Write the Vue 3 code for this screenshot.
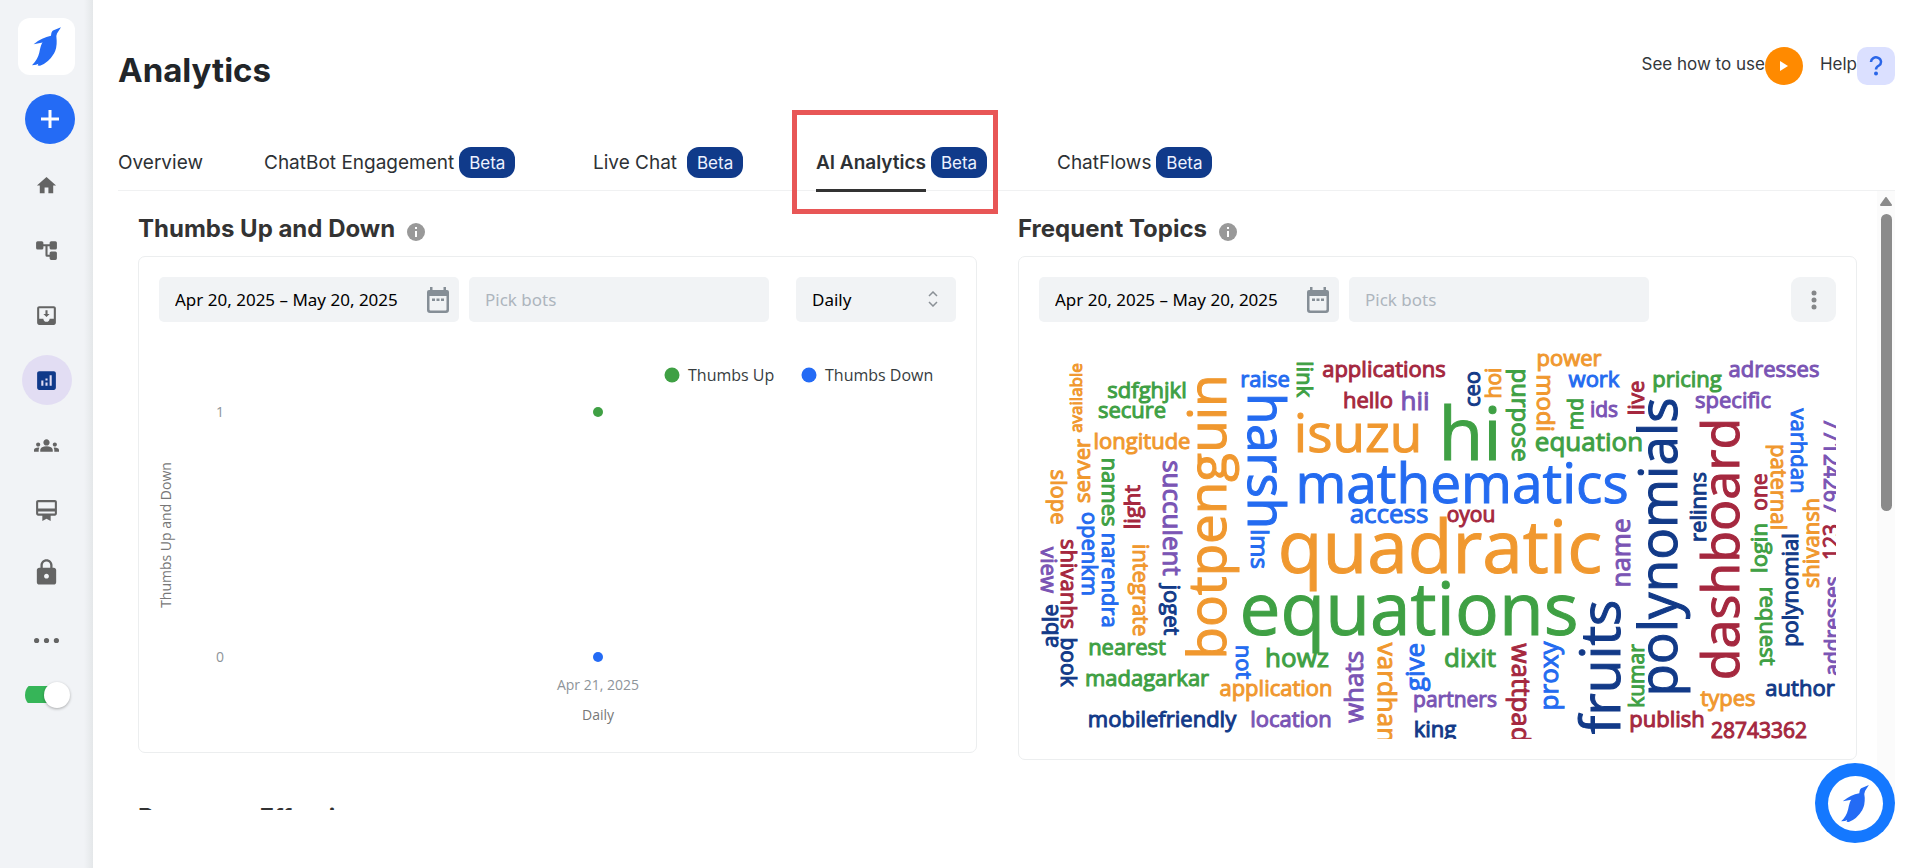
<script setup>
import { ref } from 'vue'

const dates = 'Apr 20, 2025 – May 20, 2025'
const period = ref('Daily')
const online = ref(true)

const penguin =
  'M87 0L63 10Q58 13 57 26Q30 31 5 51L32 46Q27 50 22 76Q17 98 0 114L12 113L19 110L17 115L24 116Q50 106 66 79Q75 63 74 40Q71 26 75 19Z'

const nav = [
  { label: 'Home', size: 23, d: 'M10 20v-6h4v6h5v-8h3L12 3 2 12h3v8z' },
  {
    label: 'Flows',
    size: 25,
    d: 'M3.500 3h4Q9 3 9 4.500V6h6V4.500Q15 3 16.500 3h4Q22 3 22 4.500v5Q22 11 20.500 11h-4Q15 11 15 9.500V8h-2v8h2v-1.500Q15 13 16.500 13h4q1.500 0 1.500 1.500v5q0 1.500-1.500 1.500h-4Q15 21 15 19.500V18h-2.500Q11 18 11 16.500V8H9v1.500Q9 11 7.500 11h-4Q2 11 2 9.500v-5Q2 3 3.500 3z'
  },
  {
    label: 'Inbox',
    size: 25,
    d: 'M19 3H4.990c-1.110 0-1.980.9-1.980 2L3 19c0 1.100.88 2 1.990 2H19c1.100 0 2-.9 2-2V5c0-1.100-.9-2-2-2zm0 12h-4c0 1.660-1.350 3-3 3s-3-1.340-3-3H4.990V5H19v10zm-4-4.500h-2V7h-2v3.500H9l3 3 3-3z'
  },
  {
    label: 'Analytics',
    size: 25,
    active: true,
    d: 'M19 3H5c-1.100 0-2 .9-2 2v14c0 1.100.9 2 2 2h14c1.100 0 2-.9 2-2V5c0-1.100-.9-2-2-2zM9 17H7v-5h2v5zm4 0h-2v-3h2v3zm0-5h-2v-2h2v2zm4 5h-2V7h2v10z'
  },
  {
    label: 'Team',
    size: 25,
    d: 'M12 12.750c1.630 0 3.070.39 4.240.9 1.080.48 1.760 1.560 1.760 2.730V18H6v-1.610c0-1.180.68-2.260 1.760-2.730 1.170-.52 2.610-.91 4.240-.91zM4 13c1.100 0 2-.9 2-2s-.9-2-2-2-2 .9-2 2 .9 2 2 2zm1.130 1.100c-.37-.06-.74-.1-1.130-.1-.99 0-1.930.21-2.780.58C.48 14.900 0 15.620 0 16.430V18h4.500v-1.610c0-.83.23-1.610.63-2.290zM20 13c1.100 0 2-.9 2-2s-.9-2-2-2-2 .9-2 2 .9 2 2 2zm4 3.430c0-.81-.48-1.530-1.220-1.850-.85-.37-1.790-.58-2.780-.58-.39 0-.76.04-1.130.1.4.68.63 1.460.63 2.290V18H24v-1.570zM12 6c1.660 0 3 1.340 3 3s-1.340 3-3 3-3-1.340-3-3 1.340-3 3-3z'
  },
  {
    label: 'Subscription',
    size: 25,
    d: 'M20 2H4c-1.110 0-2 .89-2 2v11c0 1.110.89 2 2 2h4v5l4-2 4 2v-5h4c1.110 0 2-.89 2-2V4c0-1.110-.89-2-2-2zm0 13H4v-2h16v2zm0-5H4V4h16v6z'
  },
  {
    label: 'Security',
    size: 29,
    raised: true,
    d: 'M18 8h-1V6c0-2.760-2.240-5-5-5S7 3.240 7 6v2H6c-1.100 0-2 .9-2 2v10c0 1.100.9 2 2 2h12c1.100 0 2-.9 2-2V10c0-1.100-.9-2-2-2zm-6 9c-1.100 0-2-.9-2-2s.9-2 2-2 2 .9 2 2-.9 2-2 2zm3.100-9H8.900V6c0-1.710 1.390-3.100 3.100-3.100s3.100 1.390 3.100 3.100v2z'
  },
  {
    label: 'More',
    size: 25,
    d: 'M2.500 9.500a2.500 2.500 0 1 0 0 5a2.500 2.500 0 1 0 0-5zM12 9.500a2.500 2.500 0 1 0 0 5a2.500 2.500 0 1 0 0-5zM21.500 9.500a2.500 2.500 0 1 0 0 5a2.500 2.500 0 1 0 0-5z'
  }
]

const tabs = [
  { label: 'Overview' },
  { label: 'ChatBot Engagement', beta: true },
  { label: 'Live Chat', beta: true, wide: true },
  { label: 'AI Analytics', beta: true, active: true },
  { label: 'ChatFlows', beta: true }
]

// [text, x, y, angle, size, colour]; x is the word's middle for level words and
// its baseline for turned ones, y the other way round.
const words = [
  ['available', 43, 48, -90, 17, 'orange'],
  ['sdfghjkl', 108, 48, 0, 22, 'green'],
  ['secure', 93, 68, 0, 22, 'green'],
  ['longitude', 103, 99, 0, 22, 'orange'],
  ['server', 51, 121, -90, 22, 'orange'],
  ['slope', 12, 147, 90, 22, 'orange'],
  ['names', 63, 142, 90, 22, 'green'],
  ['light', 101, 157, -90, 22, 'red'],
  ['succulent', 124, 168, 90, 26, 'purple'],
  ['openkm', 43, 204, 90, 22, 'blue'],
  ['view', 2, 220, 90, 22, 'purple'],
  ['shivanhs', 22, 234, 90, 22, 'red'],
  ['able', 19, 276, -90, 22, 'navy'],
  ['book', 22, 312, 90, 21, 'navy'],
  ['narendra', 63, 230, 90, 22, 'blue'],
  ['integrate', 94, 240, 90, 22, 'orange'],
  ['joget', 125, 260, 90, 22, 'navy'],
  ['nearest', 88, 305, 0, 22, 'green'],
  ['madagarkar', 108, 336, 0, 22, 'green'],
  ['mobilefriendly', 123, 377, 0, 22, 'navy'],
  ['botpenguin', 187, 167, -90, 53, 'orange'],
  ['raise', 226, 37, 0, 22, 'blue'],
  ['harsh', 209, 111, 90, 51, 'blue'],
  ['link', 258, 29, 90, 22, 'green'],
  ['lms', 212, 199, 90, 24, 'blue'],
  ['not', 197, 312, 90, 22, 'blue'],
  ['applications', 345, 27, 0, 22, 'red'],
  ['hello', 329, 58, 0, 22, 'red'],
  ['hii', 376, 60, 0, 26, 'purple'],
  ['isuzu', 319, 102, 0, 53, 'orange'],
  ['hi', 431, 110, 0, 73, 'green'],
  ['mathematics', 423, 153, 0, 55, 'blue'],
  ['access', 350, 173, 0, 26, 'blue'],
  ['oyou', 432, 172, 0, 21, 'red'],
  ['quadratic', 401, 223, 0, 73, 'orange'],
  ['equations', 370, 285, 0, 73, 'green'],
  ['ceo', 441, 39, -90, 22, 'navy'],
  ['hoi', 462, 33, -90, 21, 'orange'],
  ['purpose', 473, 65, 90, 24, 'green'],
  ['modi', 498, 53, 90, 24, 'orange'],
  ['power', 530, 16, 0, 22, 'orange'],
  ['work', 555, 37, 0, 22, 'blue'],
  ['md', 544, 64, -90, 21, 'green'],
  ['ids', 565, 67, 0, 21, 'purple'],
  ['live', 605, 48, -90, 22, 'red'],
  ['pricing', 648, 37, 0, 22, 'green'],
  ['adresses', 735, 27, 0, 22, 'purple'],
  ['specific', 694, 58, 0, 22, 'purple'],
  ['equation', 550, 101, 0, 26, 'green'],
  ['polynomials', 638, 197, -90, 53, 'navy'],
  ['dashboard', 700, 199, -90, 52, 'red'],
  ['name', 591, 203, -90, 26, 'purple'],
  ['relinns', 667, 157, -90, 22, 'navy'],
  ['one', 728, 142, -90, 21, 'red'],
  ['login', 728, 198, -90, 22, 'green'],
  ['paternal', 732, 137, 90, 22, 'orange'],
  ['varhdan', 752, 101, 90, 22, 'blue'],
  ['shivansh', 780, 193, -90, 22, 'orange'],
  ['polynomial', 759, 240, -90, 22, 'navy'],
  ['request', 721, 276, 90, 22, 'green'],
  ['77124267', 785, 116, 90, 21, 'purple'],
  ['123', 800, 192, -90, 21, 'red'],
  ['addresses', 801, 276, -90, 21, 'purple'],
  ['fruits', 581, 317, -90, 55, 'navy'],
  ['kumar', 605, 326, -90, 21, 'green'],
  ['proxy', 519, 326, -90, 26, 'blue'],
  ['types', 689, 356, 0, 22, 'orange'],
  ['author', 761, 346, 0, 22, 'navy'],
  ['publish', 628, 377, 0, 22, 'red'],
  ['28743362', 720, 388, 0, 21, 'red'],
  ['howz', 258, 317, 0, 26, 'green'],
  ['application', 237, 346, 0, 22, 'orange'],
  ['location', 252, 377, 0, 22, 'purple'],
  ['whats', 324, 337, -90, 26, 'purple'],
  ['vardhan', 339, 343, 90, 26, 'orange'],
  ['give', 385, 317, -90, 26, 'blue'],
  ['dixit', 431, 317, 0, 26, 'green'],
  ['partners', 416, 357, 0, 21, 'purple'],
  ['king', 396, 387, 0, 22, 'navy'],
  ['wattpad', 473, 343, 90, 26, 'red']
].map(([text, x, y, angle, size, tone]) => ({ text, x, y, angle, size, tone }))
</script>

<template>
  <div class="app">
    <aside class="sidebar">
      <a class="logo" href="#" aria-label="Dashboard">
        <svg width="29" height="39" viewBox="0 0 87 116"><path :d="penguin" fill="#246bf5" /></svg>
      </a>
      <button class="add" type="button" aria-label="Create">
        <svg width="20" height="20" viewBox="0 0 20 20"><path d="M10 1v18M1 10h18" stroke="#fff" stroke-width="3" /></svg>
      </button>
      <nav class="nav">
        <a
          v-for="item in nav"
          :key="item.label"
          href="#"
          class="nav-item"
          :class="{ active: item.active, raised: item.raised }"
          :aria-label="item.label"
        >
          <svg :width="item.size" :height="item.size" viewBox="0 0 24 24"><path :d="item.d" fill="currentColor" /></svg>
        </a>
      </nav>
      <input v-model="online" class="switch" type="checkbox" role="switch" aria-label="Online" />
    </aside>

    <main class="main">
      <header class="header">
        <h1>Analytics</h1>
        <div class="actions">
          <a href="#" class="action">
            <span>See how to use</span>
            <span class="play"><svg width="8" height="10" viewBox="0 0 8 10"><path d="M0 0l8 5-8 5z" fill="#fff" /></svg></span>
          </a>
          <a href="#" class="action">
            <span>Help</span>
            <span class="question">
              <svg width="14" height="20" viewBox="0 0 14 20">
                <path d="M2 6a5 4.500 0 1 1 8 3.500Q7 11 7 13.500" fill="none" stroke="#2a66e8" stroke-width="2.500" />
                <circle cx="7" cy="17.500" r="2" fill="#2a66e8" />
              </svg>
            </span>
          </a>
        </div>
      </header>

      <nav class="tabs" aria-label="Analytics sections">
        <a v-for="tab in tabs" :key="tab.label" href="#" class="tab" :class="{ active: tab.active, wide: tab.wide }">
          <span class="tab-label">{{ tab.label }}</span>
          <span v-if="tab.beta" class="beta">Beta</span>
        </a>
      </nav>

      <div class="viewport">
        <div class="grid">
          <section>
            <h2>
              Thumbs Up and Down
              <svg class="info" width="18" height="18" viewBox="0 0 18 18">
                <circle cx="9" cy="9" r="9" fill="#999" />
                <path d="M8 4h2v2H8zM8 8h2v6H8z" fill="#fff" />
              </svg>
            </h2>
            <div class="card">
              <div class="tools">
                <label class="field date">
                  <input type="text" :value="dates" readonly aria-label="Date range" />
                  <svg width="24" height="26" viewBox="0 0 24 26">
                    <path
                      fill="#858e96"
                      fill-rule="evenodd"
                      d="M4 0h2.500v3h11V0H20v3h1q2 0 2 2v18q0 3-3 3H4q-3 0-3-3V5q0-2 2-2h1zM3.500 9v13.500q0 1 1 1h15q1 0 1-1V9zM6 11.500h3v2.500H6zM10.500 11.500h3v2.500h-3zM15 11.500h3v2.500h-3z"
                    />
                  </svg>
                </label>
                <input class="field bots" type="text" placeholder="Pick bots" aria-label="Pick bots" />
                <div class="period">
                  <select v-model="period" class="field" aria-label="Period">
                    <option>Daily</option>
                    <option>Weekly</option>
                    <option>Monthly</option>
                  </select>
                  <svg width="10" height="16" viewBox="0 0 10 16">
                    <path d="M1 5l4-4 4 4M1 11l4 4 4-4" fill="none" stroke="#8a9096" stroke-width="1.500" />
                  </svg>
                </div>
              </div>
              <svg class="chart" viewBox="0 0 797 410" role="img" aria-label="Thumbs up and down by day">
                <g class="legend">
                  <circle cx="513" cy="53" r="7.500" fill="#3fa044" />
                  <text x="529" y="59">Thumbs Up</text>
                  <circle cx="650" cy="53" r="7.500" fill="#246bf5" />
                  <text x="666" y="59">Thumbs Down</text>
                </g>
                <g class="axis">
                  <text x="61" y="95">1</text>
                  <text x="61" y="340">0</text>
                  <text x="439" y="368">Apr 21, 2025</text>
                  <text x="439" y="398" class="name">Daily</text>
                  <text transform="translate(12 213) rotate(-90)" class="name">Thumbs Up and Down</text>
                </g>
                <circle cx="439" cy="90" r="5" fill="#3fa044" />
                <circle cx="439" cy="335" r="5" fill="#246bf5" />
              </svg>
            </div>
          </section>

          <section>
            <h2>
              Frequent Topics
              <svg class="info" width="18" height="18" viewBox="0 0 18 18">
                <circle cx="9" cy="9" r="9" fill="#999" />
                <path d="M8 4h2v2H8zM8 8h2v6H8z" fill="#fff" />
              </svg>
            </h2>
            <div class="card">
              <div class="tools">
                <label class="field date">
                  <input type="text" :value="dates" readonly aria-label="Date range" />
                  <svg width="24" height="26" viewBox="0 0 24 26">
                    <path
                      fill="#858e96"
                      fill-rule="evenodd"
                      d="M4 0h2.500v3h11V0H20v3h1q2 0 2 2v18q0 3-3 3H4q-3 0-3-3V5q0-2 2-2h1zM3.500 9v13.500q0 1 1 1h15q1 0 1-1V9zM6 11.500h3v2.500H6zM10.500 11.500h3v2.500h-3zM15 11.500h3v2.500h-3z"
                    />
                  </svg>
                </label>
                <input class="field bots" type="text" placeholder="Pick bots" aria-label="Pick bots" />
                <button class="kebab" type="button" aria-label="More options">
                  <svg width="6" height="20" viewBox="0 0 6 20" fill="#858789">
                    <circle cx="3" cy="3" r="2.500" /><circle cx="3" cy="10" r="2.500" /><circle cx="3" cy="17" r="2.500" />
                  </svg>
                </button>
              </div>
              <svg class="cloud" viewBox="0 0 797 389" role="img" aria-label="Frequent topics">
                <text
                  v-for="word in words"
                  :key="word.text"
                  :class="word.tone"
                  :font-size="word.size"
                  :transform="`translate(${word.x} ${word.y}) rotate(${word.angle})`"
                >{{ word.text }}</text>
              </svg>
            </div>
          </section>

          <section>
            <h2>Response Effectiveness</h2>
          </section>
        </div>
        <div class="scrollbar" aria-hidden="true">
          <svg width="12" height="9" viewBox="0 0 12 9"><path d="M6 1l5 7H1z" fill="#8b8b8b" stroke="#8b8b8b" stroke-width="2" stroke-linejoin="round" /></svg>
          <div class="thumb"></div>
        </div>
      </div>
    </main>

    <button class="bubble" type="button" aria-label="Open chat">
      <span><svg width="28" height="37" viewBox="0 0 87 116"><path :d="penguin" fill="#246bf5" /></svg></span>
    </button>
  </div>
</template>

<style>
body {
  margin: 0;
  background: #fff;
}
</style>

<style scoped>
.app {
  display: flex;
  height: 100vh;
  overflow: hidden;
  font-family: Inter, 'Liberation Sans', sans-serif;
  color: #212529;
}
a {
  color: inherit;
  text-decoration: none;
}
button {
  padding: 0;
  border: 0;
  cursor: pointer;
}
.sidebar {
  flex: none;
  box-sizing: border-box;
  width: 93px;
  padding-top: 18px;
  display: flex;
  flex-direction: column;
  align-items: center;
  background: linear-gradient(to right, #f1f3f6 84px, #e4e7e9);
}
.logo {
  display: grid;
  place-items: center;
  width: 57px;
  height: 57px;
  border-radius: 12px;
  background: #fff;
}
.add {
  display: grid;
  place-items: center;
  width: 50px;
  height: 50px;
  margin: 19px 0 16px 7px;
  border-radius: 50%;
  background: #246bf5;
}
.nav {
  display: flex;
  flex-direction: column;
  gap: 15px;
}
.nav-item {
  display: grid;
  place-items: center;
  box-sizing: border-box;
  width: 50px;
  height: 50px;
  border-radius: 50%;
  color: #646464;
}
.nav-item.active {
  background: #e2ddf3;
  color: #103a8a;
}
.nav-item.raised {
  padding-bottom: 6px;
}
.switch {
  appearance: none;
  display: flex;
  justify-content: flex-end;
  width: 45px;
  height: 26px;
  margin: 17px 0 0 2px;
  border-radius: 13px;
  background: linear-gradient(#36b558, #36b558) 0 4px / 36px 17px no-repeat;
  cursor: pointer;
}
.switch::before {
  content: '';
  width: 26px;
  height: 26px;
  border-radius: 50%;
  background: #fff;
  box-shadow: 0 1px 3px rgba(0, 0, 0, 0.3);
}
.main {
  flex: 1;
  min-width: 0;
  display: flex;
  flex-direction: column;
  padding: 47px 12px 58px 25px;
}
.header {
  display: flex;
  justify-content: space-between;
  align-items: flex-start;
}
h1 {
  margin: 0;
  font-size: 33px;
  line-height: 46px;
  font-weight: 700;
}
.actions {
  display: flex;
  gap: 17px;
  font-size: 17px;
  line-height: 34px;
  color: #33373b;
}
.action {
  display: flex;
}
.play,
.question {
  display: grid;
  place-items: center;
  width: 38px;
  height: 38px;
  background: #ff8a00;
  border-radius: 50%;
}
.question {
  background: #dbe0ff;
  border-radius: 10px;
}
.tabs {
  display: grid;
  grid-template-columns: 146px 329px 223px 241px auto;
  margin-top: 54px;
  padding-bottom: 12px;
  border-bottom: 1px solid #f0f1f2;
  font-size: 19px;
  line-height: 32px;
  color: #2d3135;
}
.tab {
  position: relative;
  display: flex;
  gap: 5px;
  height: 31px;
  white-space: nowrap;
  justify-self: start;
}
.tab.wide {
  gap: 10px;
}
.tab.active {
  font-weight: 600;
}
.tab.active .tab-label {
  margin-bottom: -14px;
  border-bottom: 3px solid #333;
}
.tab.active::after {
  content: '';
  position: absolute;
  inset: -37px -11px -36px -24px;
  border: 5px solid #e85656;
  z-index: 2;
}
.beta {
  box-sizing: border-box;
  width: 56px;
  height: 31px;
  border-radius: 12px;
  background: #103a8a;
  color: #eef2ff;
  font-size: 17px;
  font-weight: 400;
  text-align: center;
}
.viewport {
  flex: 1;
  min-height: 0;
  display: flex;
  overflow: hidden;
}
.grid {
  flex: 1;
  min-width: 0;
  display: grid;
  grid-template-columns: 1fr 1fr;
  align-content: start;
  align-items: start;
  gap: 43px 41px;
  padding: 23px 20px 0 20px;
}
h2 {
  display: flex;
  align-items: center;
  gap: 12px;
  margin: 0 0 12px;
  font-size: 24px;
  line-height: 30px;
  font-weight: 700;
  color: #333;
}
.info {
  margin-top: 5px;
}
.card {
  padding: 20px;
  border: 1px solid #eceeef;
  border-radius: 7px;
}
.tools {
  display: flex;
  gap: 10px;
}
.field {
  box-sizing: border-box;
  height: 45px;
  width: 300px;
  min-width: 0;
  padding: 0 16px;
  border: 0;
  border-radius: 5px;
  background: #f1f3f5;
  font: 17px/24px 'Noto Sans', 'Open Sans', sans-serif;
  color: #000;
}
.date {
  display: flex;
  align-items: center;
  justify-content: space-between;
  padding-right: 9px;
}
.date input {
  flex: 1;
  min-width: 0;
  padding: 0;
  border: 0;
  background: none;
  font: inherit;
  color: inherit;
}
.bots::placeholder {
  color: #adb5bd;
}
.period {
  position: relative;
  margin-left: auto;
}
.period select {
  appearance: none;
  width: 160px;
}
.period svg {
  position: absolute;
  right: 18px;
  top: 14px;
  pointer-events: none;
}
.kebab {
  display: grid;
  place-items: center;
  width: 45px;
  height: 45px;
  margin-left: auto;
  border-radius: 9px;
  background: #f1f3f5;
}
.chart,
.cloud {
  display: block;
  width: 100%;
  font-family: 'Open Sans', 'Noto Sans', sans-serif;
}
.cloud {
  margin-top: 28px;
  overflow: hidden;
  font-weight: 500;
  text-anchor: middle;
}
.cloud text {
  stroke: currentColor;
  stroke-width: 1px;
  fill: currentColor;
}
.legend {
  font-size: 16px;
  fill: #373d3f;
}
.axis {
  font-size: 14px;
  fill: #8e9499;
  text-anchor: middle;
}
.axis .name {
  fill: #777;
}
.orange { color: #f0982f; }
.green { color: #3fa044; }
.blue { color: #246bf0; }
.navy { color: #123a88; }
.red { color: #a5283f; }
.purple { color: #7a54b4; }
.scrollbar {
  flex: none;
  width: 18px;
  padding-top: 6px;
  display: flex;
  flex-direction: column;
  align-items: center;
  gap: 8px;
  background: #fbfbfb;
}
.thumb {
  width: 11px;
  height: 297px;
  border-radius: 6px;
  background: #8b8b8b;
}
.bubble {
  position: fixed;
  right: 12px;
  bottom: 25px;
  display: grid;
  place-items: center;
  width: 80px;
  height: 80px;
  border-radius: 50%;
  background: #1478ff;
}
.bubble span {
  display: grid;
  place-items: center;
  width: 55px;
  height: 55px;
  border-radius: 50%;
  background: #fff;
}
</style>
